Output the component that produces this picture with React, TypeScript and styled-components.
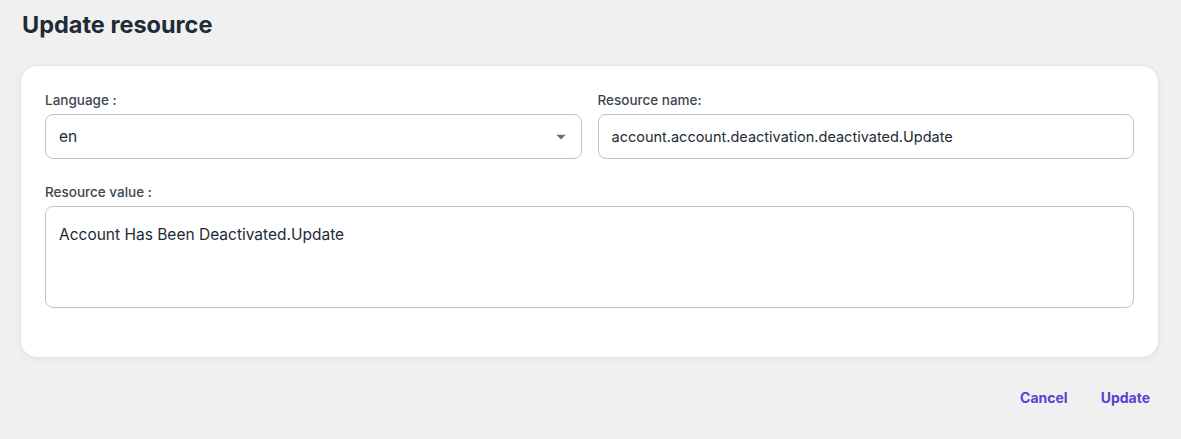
import React from "react";
import styled, { createGlobalStyle } from "styled-components";

const Global = createGlobalStyle`
  html, body { margin: 0; padding: 0; background: #f0f0f0; }
  body { font-family: "Inter", "Liberation Sans", sans-serif; color: #212b36; }
  * { box-sizing: border-box; }
`;

const Page = styled.div`
  width: 1181px;
  height: 439px;
  padding: 9px 23px 0 21px;
  display: flex;
  flex-direction: column;
`;

const Title = styled.h1`
  margin: 0 0 0 1px;
  font-size: 23.5px;
  font-weight: 700;
  line-height: 32px;
  color: #212b36;
`;

const Card = styled.div`
  margin-top: 25px;
  background: #fff;
  border-radius: 16px;
  box-shadow: 0 2px 6px rgba(145, 158, 171, 0.16), 0 0 2px rgba(145, 158, 171, 0.2);
  padding: 25px 24px 49px 24px;
  display: flex;
  flex-direction: column;
  gap: 24px;
`;

const Row = styled.div`
  display: grid;
  grid-template-columns: 1fr 1fr;
  gap: 16px;
`;

const Field = styled.div`
  display: flex;
  flex-direction: column;
`;

const Label = styled.label`
  font-size: 13.5px;
  font-weight: 500;
  color: #3d4650;
  line-height: 18px;
  margin-bottom: 5px;
`;

const Box = styled.div<{ $tall?: boolean; $big?: boolean }>`
  position: relative;
  height: ${(p) => (p.$tall ? "102px" : "45px")};
  border: 1px solid #c4c4c4;
  border-radius: 8px;
  padding: ${(p) => (p.$tall ? "18px 13px" : "0 13px")};
  display: flex;
  align-items: ${(p) => (p.$tall ? "flex-start" : "center")};
  font-size: ${(p) => (p.$big ? "15.5px" : "14.5px")};
  color: #212b36;
`;

const Arrow = styled.svg`
  position: absolute;
  right: 15px;
  top: 50%;
  transform: translateY(-50%);
`;

const Actions = styled.div`
  display: flex;
  justify-content: flex-end;
  gap: 33px;
  margin-top: 32px;
  padding-right: 8px;
`;

const TextButton = styled.button`
  border: none;
  background: none;
  padding: 0;
  font-family: inherit;
  font-size: 14px;
  font-weight: 700;
  color: #5b3fd0;
  cursor: pointer;
`;

export default function App() {
  return (
    <>
      <Global />
      <Page>
        <Title>Update resource</Title>
        <Card>
          <Row>
            <Field>
              <Label>Language :</Label>
              <Box $big>
                en
                <Arrow width="10" height="5" viewBox="0 0 10 5">
                  <path d="M0 0 L10 0 L5 5 Z" fill="#637381" />
                </Arrow>
              </Box>
            </Field>
            <Field>
              <Label>Resource name:</Label>
              <Box>account.account.deactivation.deactivated.Update</Box>
            </Field>
          </Row>
          <Field>
            <Label>Resource value :</Label>
            <Box $tall $big>Account Has Been Deactivated.Update</Box>
          </Field>
        </Card>
        <Actions>
          <TextButton>Cancel</TextButton>
          <TextButton>Update</TextButton>
        </Actions>
      </Page>
    </>
  );
}
